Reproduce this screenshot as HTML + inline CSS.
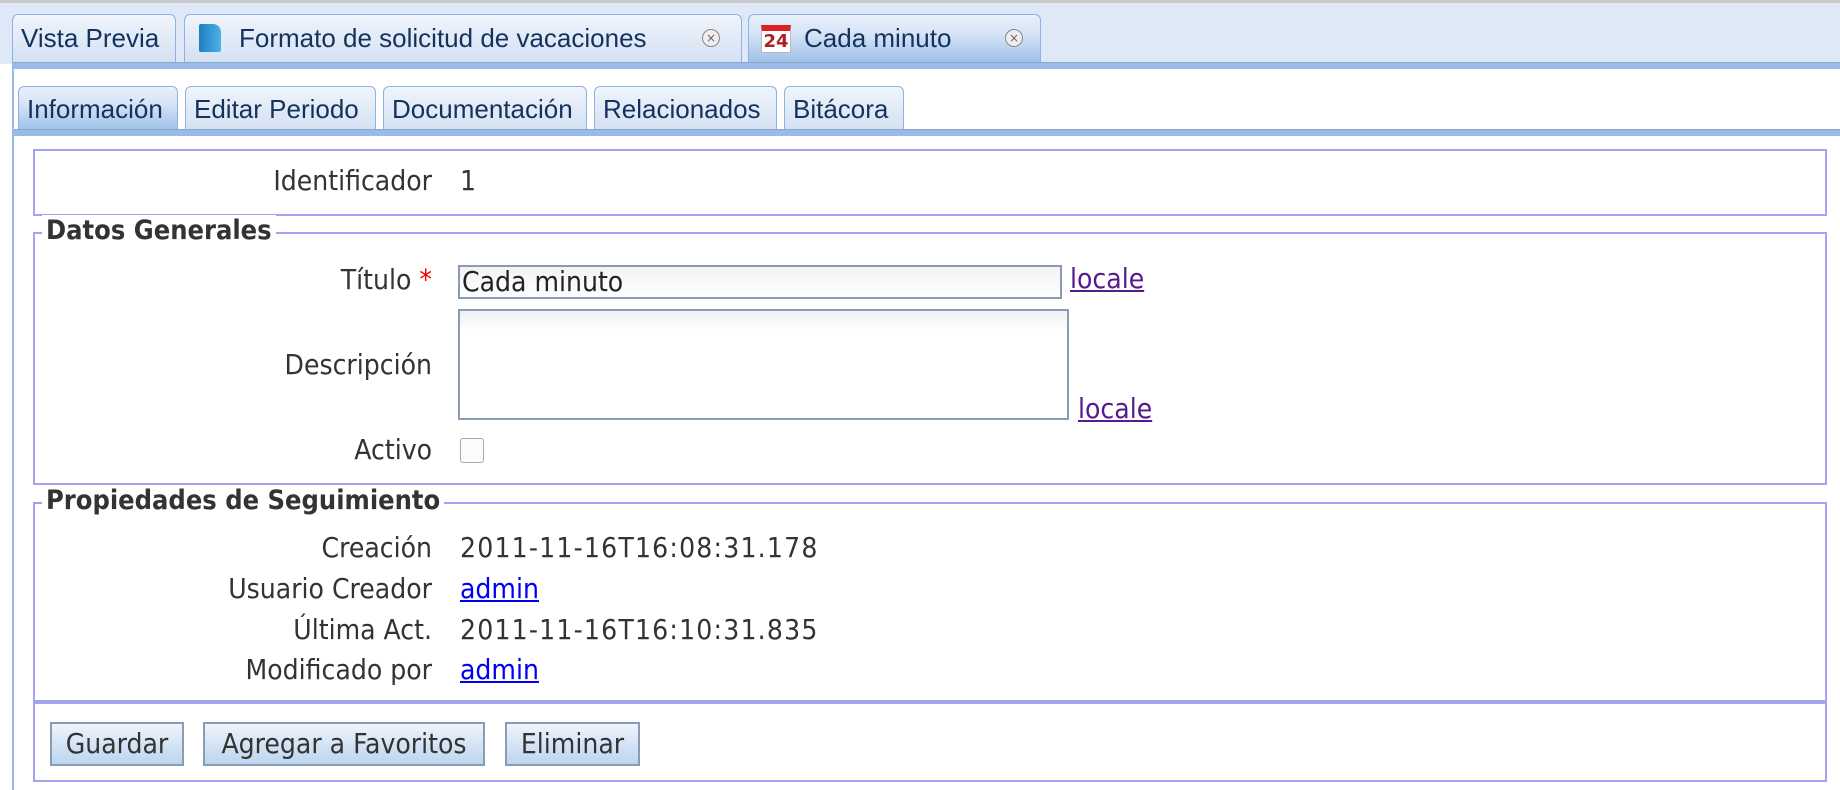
<!DOCTYPE html>
<html><head><meta charset="utf-8"><style>
body{margin:0;width:1840px;height:790px;background:#fff;position:relative;overflow:hidden;font-family:"DejaVu Sans Condensed","DejaVu Sans",sans-serif;color:#222}
.abs{position:absolute}
.tab{position:absolute;box-sizing:border-box;border:1px solid #8db2e3;border-bottom:none;border-radius:6px 6px 0 0;background:linear-gradient(#f0f4fb,#d4e1f2);font-family:"Liberation Sans",sans-serif;font-size:26px;color:#15325e;padding-left:8px;white-space:nowrap}
.act{background:linear-gradient(#e8f0fb 0%,#d6e4f6 40%,#9fc0e9 100%)}
.x{position:absolute;width:16px;height:16px;border:1.5px solid #888;border-radius:50%;font-size:12px;line-height:16px;text-align:center;color:#666;font-family:"DejaVu Sans",sans-serif;background:#eee}
.box{position:absolute;border:2px solid #a3a3f0;box-sizing:border-box}
.lbl{position:absolute;text-align:right;font-size:28px;width:400px;color:#333}
.val{position:absolute;font-size:28px;color:#333}
.dt{letter-spacing:1.2px}
a{color:#0000ee;text-decoration:underline}
.btn{position:absolute;box-sizing:border-box;border:2px solid #8a9cb5;background:linear-gradient(#eef4fc,#bcd5ef);font-size:28px;text-align:center;line-height:40px;color:#333}
</style></head><body>
<div class="abs" style="left:0;top:0;width:1840px;height:64px;background:#dfe8f6;border-top:3px solid #ccc;box-sizing:border-box"></div>
<div class="tab" style="left:12px;top:14px;width:164px;height:48px;line-height:46px">Vista Previa</div>
<div class="tab" style="left:184px;top:14px;width:558px;height:48px;line-height:46px;padding-left:54px">Formato de solicitud de vacaciones
 <div class="abs" style="left:14px;top:9px;width:22px;height:28px;background:linear-gradient(90deg,#1d7fc2,#4eb1e6);border-radius:2px 8px 2px 2px"></div>
 <div class="x" style="left:517px;top:14px">×</div></div>
<div class="tab act" style="left:748px;top:14px;width:293px;height:48px;line-height:46px;padding-left:55px">Cada minuto
 <div class="abs" style="left:12px;top:10px;width:30px;height:28px;background:#fff;border:1px solid #bbb;border-top:6px solid #d22;font:bold 18px 'DejaVu Sans';color:#a22;line-height:22px;text-align:center;box-sizing:border-box">24</div>
 <div class="x" style="left:256px;top:14px">×</div></div>
<div class="abs" style="left:12px;top:62px;width:1828px;height:6px;background:#99bbe8;border-top:1px solid #8aa6cc"></div>
<div class="abs" style="left:12px;top:68px;width:2px;height:722px;background:#99bbe8"></div>

<div class="tab act" style="left:18px;top:86px;width:160px;height:44px;line-height:44px">Información</div>
<div class="tab" style="left:185px;top:86px;width:191px;height:44px;line-height:44px">Editar Periodo</div>
<div class="tab" style="left:383px;top:86px;width:204px;height:44px;line-height:44px">Documentación</div>
<div class="tab" style="left:594px;top:86px;width:183px;height:44px;line-height:44px">Relacionados</div>
<div class="tab" style="left:784px;top:86px;width:120px;height:44px;line-height:44px">Bitácora</div>
<div class="abs" style="left:14px;top:129px;width:1826px;height:6px;background:#99bbe8;border-top:1px solid #8aa6cc"></div>

<div class="box" style="left:33px;top:149px;width:1794px;height:67px"></div>
<div class="lbl" style="left:32px;top:164px">Identificador</div>
<div class="val" style="left:460px;top:164px">1</div>

<div class="box" style="left:33px;top:232px;width:1794px;height:253px"></div>
<div class="abs" style="left:42px;top:215px;background:#fff;padding:0 4px;font-weight:bold;font-size:27px;color:#333">Datos Generales</div>
<div class="lbl" style="left:32px;top:263px">Título <span style="color:#e00">*</span></div>
<div class="abs" style="left:458px;top:265px;width:604px;height:34px;border:2px solid #8a9cb5;box-sizing:border-box;background:linear-gradient(#f2f2f2,#fff);font-size:28px;line-height:30px;padding-left:2px;color:#222">Cada minuto</div>
<a class="abs" style="left:1070px;top:262px;font-size:28px;color:#551a8b">locale</a>
<div class="lbl" style="left:32px;top:348px">Descripción</div>
<div class="abs" style="left:458px;top:309px;width:611px;height:111px;border:2px solid #8a9cb5;box-sizing:border-box;background:linear-gradient(#f0f0f0,#fff 20px)"></div>
<a class="abs" style="left:1078px;top:392px;font-size:28px;color:#551a8b">locale</a>
<div class="lbl" style="left:32px;top:433px">Activo</div>
<div class="abs" style="left:460px;top:438px;width:24px;height:25px;border:1.5px solid #aaa;border-radius:3px;box-sizing:border-box;background:#fbfbfb"></div>

<div class="box" style="left:33px;top:502px;width:1794px;height:201px"></div>
<div class="abs" style="left:42px;top:485px;background:#fff;padding:0 4px;font-weight:bold;font-size:27px;color:#333">Propiedades de Seguimiento</div>
<div class="lbl" style="left:32px;top:531px">Creación</div>
<div class="val dt" style="left:460px;top:531px">2011-11-16T16:08:31.178</div>
<div class="lbl" style="left:32px;top:572px">Usuario Creador</div>
<a class="val" style="left:460px;top:572px;color:#0000ee">admin</a>
<div class="lbl" style="left:32px;top:613px">Última Act.</div>
<div class="val dt" style="left:460px;top:613px">2011-11-16T16:10:31.835</div>
<div class="lbl" style="left:32px;top:653px">Modificado por</div>
<a class="val" style="left:460px;top:653px;color:#0000ee">admin</a>

<div class="box" style="left:33px;top:700px;width:1794px;height:82px;border-top-width:4px"></div>
<div class="btn" style="left:50px;top:722px;width:134px;height:44px">Guardar</div>
<div class="btn" style="left:203px;top:722px;width:282px;height:44px">Agregar a Favoritos</div>
<div class="btn" style="left:505px;top:722px;width:135px;height:44px">Eliminar</div>
</body></html>
